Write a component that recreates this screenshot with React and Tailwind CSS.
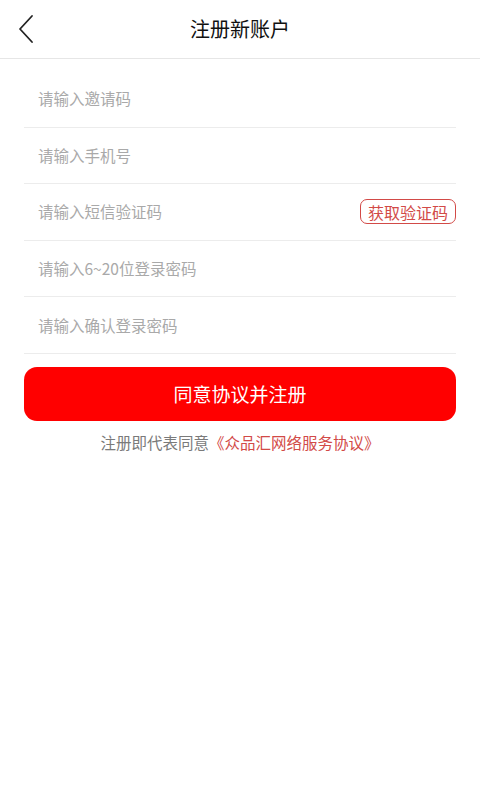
import React from 'react';

const font = { fontFamily: '"Noto Sans CJK SC", "Noto Sans", sans-serif' };

function Field({ placeholder, action }) {
  return (
    <div className="flex items-center justify-between h-[56.6px] border-b border-[#ececec]">
      <input
        className="flex-1 ml-[14px] bg-transparent outline-none text-[15.5px] text-[#333] placeholder:text-[#a9a9a9]"
        placeholder={placeholder}
      />
      {action && (
        <button className="h-[25px] px-[7px] rounded-[7px] border border-[#d24a47] text-[16px] leading-none text-[#d24a47]">
          {action}
        </button>
      )}
    </div>
  );
}

export default function App() {
  return (
    <div className="w-[480px] h-[800px] bg-white" style={font}>
      <div className="relative flex items-center justify-center h-[59px] border-b border-[#e6e6e6]">
        <button className="absolute left-[14px] top-[14px] w-[24px] h-[30px] flex items-center justify-center">
          <svg width="18" height="30" viewBox="0 0 18 30" fill="none">
            <path d="M15 2 L3 15 L15 28" stroke="#222" strokeWidth="1.8" strokeLinecap="round" strokeLinejoin="round" />
          </svg>
        </button>
        <h1 className="text-[20px] text-[#111]">注册新账户</h1>
      </div>

      <div className="px-6 pt-[12px]">
        <Field placeholder="请输入邀请码" />
        <Field placeholder="请输入手机号" />
        <Field placeholder="请输入短信验证码" action="获取验证码" />
        <Field placeholder="请输入6~20位登录密码" />
        <Field placeholder="请输入确认登录密码" />

        <button className="mt-[13px] w-full h-[54px] rounded-[13px] bg-[#ff0000] text-white text-[19px]">
          同意协议并注册
        </button>

        <p className="mt-[10px] text-center text-[15.5px] text-[#7a7a7a]">
          注册即代表同意<span className="text-[#d24a47]">《众品汇网络服务协议》</span>
        </p>
      </div>
    </div>
  );
}
